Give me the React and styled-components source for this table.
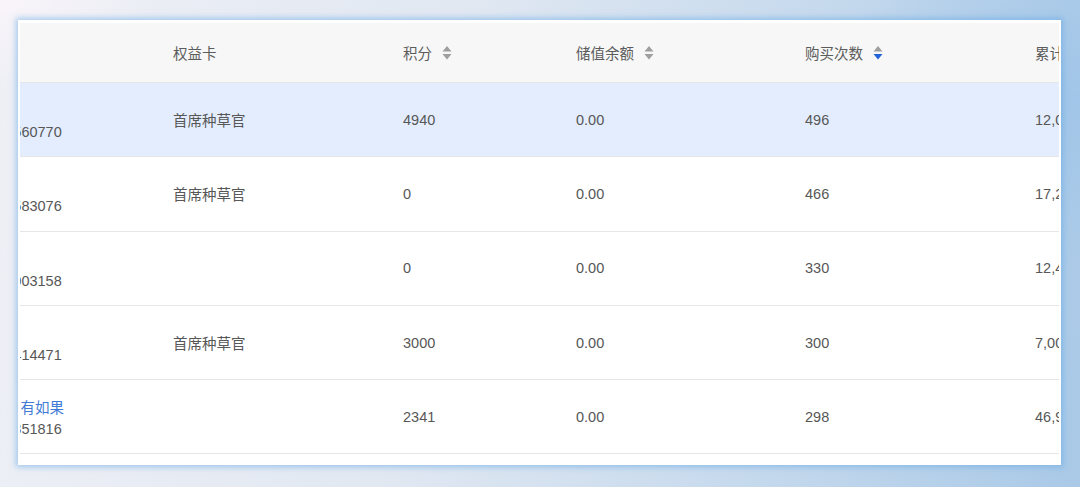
import React from "react";
import styled, { createGlobalStyle } from "styled-components";

const GlobalStyle = createGlobalStyle`
  html, body {
    margin: 0;
    padding: 0;
  }
  body {
    font-family: "Liberation Sans", "Noto Sans CJK SC", sans-serif;
  }
`;

const columns = [
  { key: "member", title: "会员", width: 200 },
  { key: "card", title: "权益卡", width: 230 },
  { key: "points", title: "积分", width: 173, sort: "none" },
  { key: "balance", title: "储值余额", width: 229, sort: "none" },
  { key: "orders", title: "购买次数", width: 230, sort: "desc" },
  { key: "total", title: "累计消费", width: 180 },
];

const rows = [
  { name: "王小", phone: "13812560770", card: "首席种草官", points: "4940", balance: "0.00", orders: "496", total: "12,036.80", active: true },
  { name: "李娜", phone: "15967583076", card: "首席种草官", points: "0", balance: "0.00", orders: "466", total: "17,218.40" },
  { name: "张敏", phone: "18606003158", card: "", points: "0", balance: "0.00", orders: "330", total: "12,455.00" },
  { name: "陈晨", phone: "13758414471", card: "首席种草官", points: "3000", balance: "0.00", orders: "300", total: "7,003.60" },
  { name: "陌上花 有如果", phone: "13566351816", card: "", points: "2341", balance: "0.00", orders: "298", total: "46,921.30" },
];

const SortIcon = ({ dir }) => (
  <SortSvg width="10" height="14" viewBox="0 0 10 14">
    <polygon points="5,0 9.5,5.5 0.5,5.5" fill={dir === "asc" ? "#2462d9" : "#9e9e9e"} />
    <polygon points="0.5,8 9.5,8 5,13.5" fill={dir === "desc" ? "#2462d9" : "#9e9e9e"} />
  </SortSvg>
);

const App = () => {
  return (
    <Page>
      <GlobalStyle />
      <Panel>
        <ScrollArea>
          <Table $offset={59}>
            <colgroup>
              {columns.map((c) => (
                <col key={c.key} style={{ width: c.width }} />
              ))}
            </colgroup>
            <thead>
              <tr>
                {columns.map((c) => (
                  <Th key={c.key}>
                    <HeadLabel>
                      {c.title}
                      {c.sort && <SortIcon dir={c.sort} />}
                    </HeadLabel>
                  </Th>
                ))}
              </tr>
            </thead>
            <tbody>
              {rows.map((r) => (
                <Row key={r.phone} $active={r.active}>
                  <MemberCell>
                    <MemberName>{r.name}</MemberName>
                    <MemberPhone>{r.phone}</MemberPhone>
                  </MemberCell>
                  <Td>{r.card}</Td>
                  <Td>{r.points}</Td>
                  <Td>{r.balance}</Td>
                  <Td>{r.orders}</Td>
                  <Td>{r.total}</Td>
                </Row>
              ))}
            </tbody>
          </Table>
        </ScrollArea>
      </Panel>
    </Page>
  );
};

const Page = styled.div`
  width: 1080px;
  height: 487px;
  box-sizing: border-box;
  padding: 20px 0 0 18px;
  overflow: hidden;
  background:
    radial-gradient(ellipse 220px 120px at 0% 0%, rgba(250, 245, 250, 0.9), transparent 70%),
    radial-gradient(ellipse 360px 260px at 100% 20%, rgba(150, 192, 232, 0.55), transparent 70%),
    linear-gradient(100deg, #eff0f6 0%, #e1e8f2 40%, #c5d9ed 72%, #a9c9e7 100%);
`;

const Panel = styled.div`
  width: 1043px;
  height: 445px;
  box-sizing: border-box;
  padding: 3px 2px 12px 2px;
  background: #ffffff;
  box-shadow: 0 0 6px 2px rgba(96, 165, 228, 0.55);
`;

const ScrollArea = styled.div`
  width: 100%;
  overflow: hidden;
`;

const Table = styled.table`
  table-layout: fixed;
  border-collapse: collapse;
  border-spacing: 0;
  width: 1242px;
  margin-left: -${(p) => p.$offset}px;
  font-size: 14.5px;
  color: #575757;
`;

const Th = styled.th`
  height: 59px;
  padding: 0 12px;
  text-align: left;
  font-weight: normal;
  color: #5c5c5c;
  background: #f7f7f7;
  border-bottom: 1px solid #e6e6e6;
  white-space: nowrap;
  overflow: hidden;
`;

const HeadLabel = styled.span`
  display: inline-flex;
  align-items: center;
  gap: 10px;
`;

const SortSvg = styled.svg`
  display: block;
  flex: none;
`;

const Row = styled.tr`
  background: ${(p) => (p.$active ? "#e3edfd" : "#ffffff")};
`;

const Td = styled.td`
  height: 73.3px;
  padding: 0 12px;
  vertical-align: middle;
  border-bottom: 1px solid #e6e6e6;
  white-space: nowrap;
  overflow: hidden;
`;

const MemberCell = styled(Td)`
  padding-top: 5px;
  height: 68.3px;
`;

const MemberName = styled.div`
  line-height: 21px;
  color: #3f7bd6;
`;

const MemberPhone = styled.div`
  line-height: 21px;
  color: #575757;
`;

export default App;
